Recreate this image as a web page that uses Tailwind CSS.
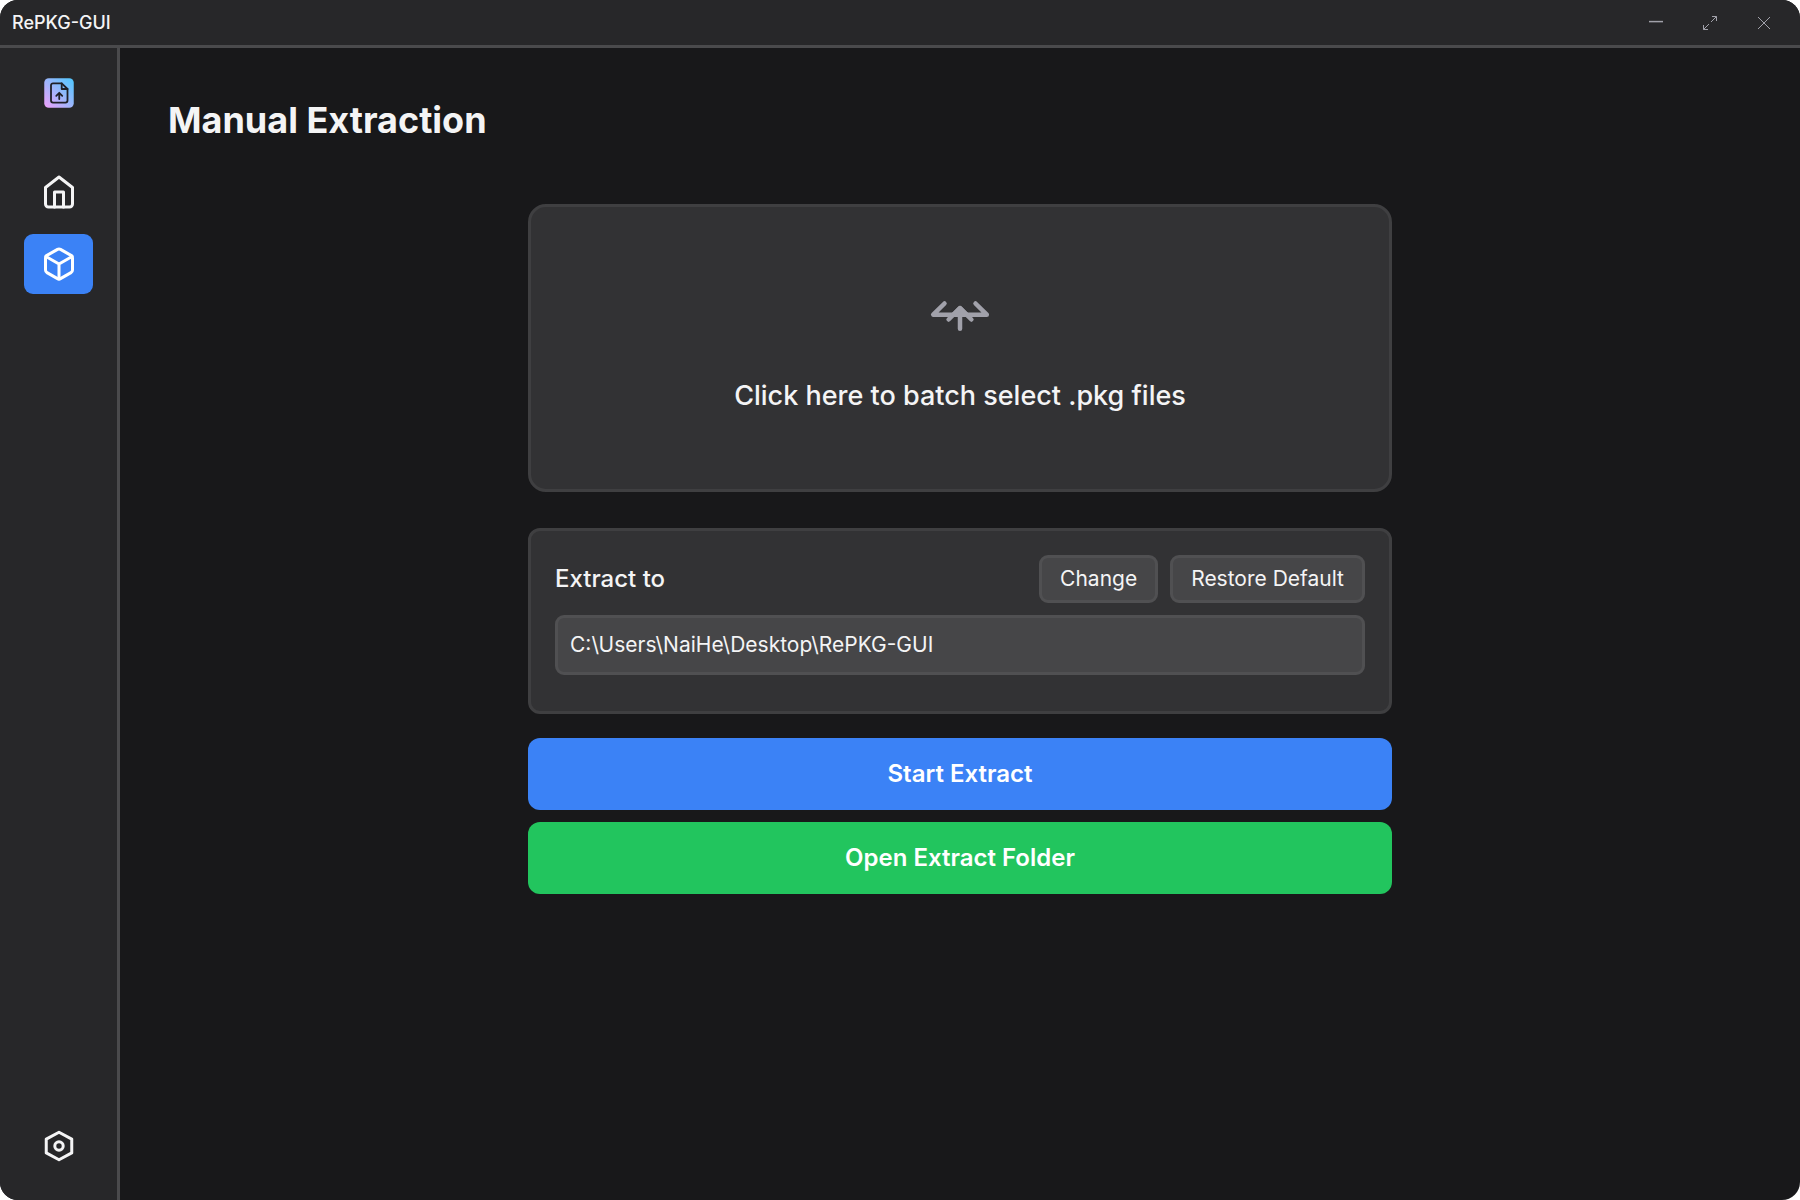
<!DOCTYPE html>
<html lang="en">
<head>
<meta charset="utf-8">
<title>RePKG-GUI</title>
<script src="https://cdn.jsdelivr.net/npm/@tailwindcss/browser@4"></script>
</head>
<body class="bg-white">
<div class="flex h-[1200px] w-[1800px] flex-col overflow-hidden rounded-[18px] bg-[#18181a] font-['Inter',sans-serif] text-[#f4f4f5]">
  <header class="flex h-12 shrink-0 items-center justify-between border-b-3 border-[#4a4a4c] bg-[#272729] pl-3 pr-[9px]">
    <span class="text-[18px] leading-[27px] font-medium">RePKG-GUI</span>
    <div class="flex text-[#a1a1aa]">
      <button class="flex h-[45px] w-[54px] items-center justify-center" aria-label="Minimize">
        <svg class="size-[18px]" viewBox="0 0 18 18" fill="none" stroke="currentColor" stroke-width="1.5"><path d="M2 7.6h14"/></svg>
      </button>
      <button class="flex h-[45px] w-[54px] items-center justify-center" aria-label="Maximize">
        <svg class="size-[18px]" viewBox="0 0 18 18" fill="none" stroke="currentColor" stroke-width="1"><path d="M11 2.5h4.5V7M15.5 2.5l-5.5 5.5M7 15.500H2.500V11M2.500 15.500l5.500-5.500"/></svg>
      </button>
      <button class="flex h-[45px] w-[54px] items-center justify-center" aria-label="Close">
        <svg class="size-[18px]" viewBox="0 0 18 18" fill="none" stroke="currentColor" stroke-width="1"><path d="M3 3l12 12M15 3L3 15"/></svg>
      </button>
    </div>
  </header>
  <div class="flex min-h-0 flex-1">
    <aside class="flex w-[120px] shrink-0 flex-col items-center border-r-3 border-[#4a4a4c] bg-[#272729] pt-[30px] pb-6">
      <div class="pl-px">
        <svg class="size-[30px]" viewBox="0 0 30 30" fill="none">
          <defs><linearGradient id="logo" x1="0" y1="1" x2="1" y2="0"><stop offset="0" stop-color="#f0a0fa"/><stop offset="0.5" stop-color="#9cb6fc"/><stop offset="1" stop-color="#4cc8ff"/></linearGradient></defs>
          <rect x="0.250" y="0.250" width="29.500" height="29.500" rx="4.500" fill="url(#logo)"/>
          <g stroke="#202028" stroke-width="1.800" stroke-linecap="round" stroke-linejoin="round"><path d="M17.700 5.300H9a2 2 0 0 0-2 2V22.600a2 2 0 0 0 2 2h12.500a2 2 0 0 0 2-2V11z"/><path d="M17.700 5.300V11h5.800M15.250 21v-6M12.250 17.800l3-3 3 3"/></g>
        </svg>
      </div>
      <nav class="mt-[54px] flex flex-col gap-3">
        <a class="flex h-[60px] w-[69px] items-center justify-center rounded-[9px] pl-px">
          <svg class="size-9" viewBox="0 0 24 24" fill="none" stroke="currentColor" stroke-width="2" stroke-linecap="round" stroke-linejoin="round"><path d="M3 9l9-7 9 7v11a2 2 0 0 1-2 2H5a2 2 0 0 1-2-2z"/><path d="M9 22V12h6v10"/></svg>
        </a>
        <a class="flex h-[60px] w-[69px] items-center justify-center rounded-[9px] bg-[#3b82f6] pl-px text-white">
          <svg class="size-9" viewBox="0 0 24 24" fill="none" stroke="currentColor" stroke-width="2" stroke-linecap="round" stroke-linejoin="round"><path d="M21 16V8a2 2 0 0 0-1-1.730l-7-4a2 2 0 0 0-2 0l-7 4A2 2 0 0 0 3 8v8a2 2 0 0 0 1 1.730l7 4a2 2 0 0 0 2 0l7-4A2 2 0 0 0 21 16z"/><path d="M3.270 6.960L12 12.010l8.730-5.050M12 22.080V12"/></svg>
        </a>
      </nav>
      <a class="mt-auto flex h-[60px] w-[69px] items-center justify-center pl-px">
        <svg class="size-9" viewBox="0 0 24 24" fill="none" stroke="currentColor" stroke-width="2" stroke-linejoin="round"><path d="M12 2.800l8.500 4.600v9.200L12 21.200l-8.500-4.600V7.400z"/><circle cx="12" cy="12" r="2.800"/></svg>
      </a>
    </aside>
    <main class="flex flex-1 flex-col px-12 pt-12">
      <h1 class="text-[36px] leading-[48px] font-bold">Manual Extraction</h1>
      <div class="mx-auto mt-[60px] flex w-[864px] flex-col">
        <div class="flex h-[288px] flex-col items-center rounded-[18px] border-3 border-[#3f3f41] bg-[#323234] pt-[69px]">
          <svg class="size-[72px] text-[#a1a1aa]" viewBox="0 0 72 72" fill="none" stroke="currentColor" stroke-width="4.500" stroke-linecap="round" stroke-linejoin="round"><path d="M20.500 27.500L9.200 38.700h53.600L51.500 27.500"/><path d="M24.600 43.500L36 32.200l11.400 11.300M36 33v19.700"/><path d="M36 32.200l-6.500 6.500h13z" fill="currentColor"/></svg>
          <p class="mt-[27px] text-[27px] leading-[42px] font-medium">Click here to batch select .pkg files</p>
        </div>
        <section class="mt-9 h-[186px] rounded-xl border-3 border-[#3f3f41] bg-[#323234] p-6">
          <div class="flex items-center justify-between">
            <span class="text-2xl font-medium">Extract to</span>
            <div class="flex gap-3">
              <button class="h-12 rounded-[9px] border-3 border-[#505052] bg-[#464648] px-[18px] text-[21px] leading-[30px]">Change</button>
              <button class="h-12 rounded-[9px] border-3 border-[#505052] bg-[#464648] px-[18px] text-[21px] leading-[30px]">Restore Default</button>
            </div>
          </div>
          <div class="mt-3 flex h-[60px] items-center rounded-[9px] border-3 border-[#505052] bg-[#464648] px-3 text-[21px] leading-[30px]">C:\Users\NaiHe\Desktop\RePKG-GUI</div>
        </section>
        <button class="mt-6 h-[72px] rounded-xl bg-[#3b82f6] text-2xl font-semibold text-white">Start Extract</button>
        <button class="mt-3 h-[72px] rounded-xl bg-[#22c55e] text-2xl font-semibold text-white">Open Extract Folder</button>
      </div>
    </main>
  </div>
</div>
</body>
</html>
